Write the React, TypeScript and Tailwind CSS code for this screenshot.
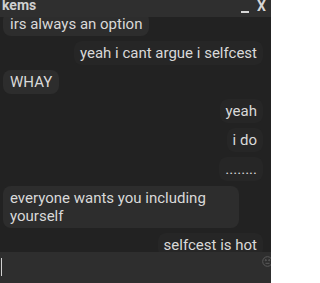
const messages = [
  { text: 'irs always an option', mine: false },
  { text: 'yeah i cant argue i selfcest', mine: true },
  { text: 'WHAY', mine: false },
  { text: 'yeah', mine: true },
  { text: 'i do', mine: true },
  { text: '........', mine: true },
  { text: 'everyone wants you including yourself', mine: false },
  { text: 'selfcest is hot', mine: true },
]

function Smiley() {
  return (
    <svg width="11" height="11" viewBox="0 0 11 11" fill="none" stroke="#5a5a5a" strokeWidth="1">
      <circle cx="5.5" cy="5.5" r="4.8" />
      <circle cx="3.8" cy="4.2" r="0.6" fill="#5a5a5a" />
      <circle cx="7.2" cy="4.2" r="0.6" fill="#5a5a5a" />
      <path d="M3.5 7.3h4" />
    </svg>
  )
}

export default function App() {
  return (
    <div className="flex h-[283px] w-[271px] flex-col overflow-hidden bg-[#222222] font-['Roboto',sans-serif] text-[#d9d9d9]">
      {/* Title bar */}
      <div className="relative z-10 flex h-[17px] shrink-0 items-start justify-between bg-[#2f2f2f] pl-[2px] pr-[5px]">
        <span className="-mt-[3px] text-[14px] font-bold leading-[17px] text-[#d0d0d0]">kems</span>
        <div className="flex items-start gap-[8px] text-[#d6d6d6]">
          <span className="mt-[11px] block h-[2px] w-[8px] bg-[#d6d6d6]" />
          <span className="-mt-[2px] text-[14px] font-bold leading-[17px]">X</span>
        </div>
      </div>

      {/* Messages */}
      <div className="-mt-[5px] flex min-h-0 flex-1 flex-col gap-[5px] overflow-hidden pl-[3px] pr-[8px]">
        {messages.map((m, i) => (
          <div key={i} className={m.mine ? 'flex justify-end' : 'flex justify-start'}>
            <div
              className={
                m.mine
                  ? 'max-w-[236px] rounded-[8px] bg-[#262626] px-[6px] py-[3px] text-[15px] leading-[18px]'
                  : 'max-w-[236px] rounded-[8px] bg-[#2d2d2d] px-[7px] py-[3px] text-[15px] leading-[18px]'
              }
            >
              {m.text}
            </div>
          </div>
        ))}
      </div>

      {/* Input */}
      <div className="relative flex h-[31px] shrink-0 items-start bg-[#2e2e2e]">
        <span className="ml-[1px] mt-[6px] block h-[18px] w-[1px] bg-[#d0d0d0]" />
        <span className="absolute -right-[2px] top-[4px]">
          <Smiley />
        </span>
      </div>
    </div>
  )
}
